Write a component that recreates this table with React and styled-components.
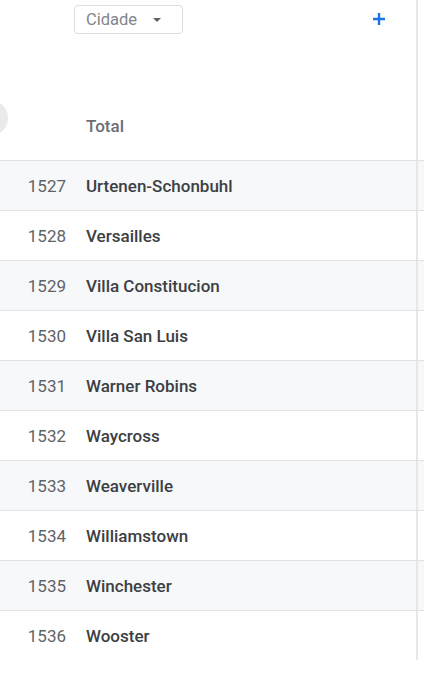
import React from 'react';
import styled, { createGlobalStyle } from 'styled-components';

const GlobalStyle = createGlobalStyle`
    body {
        margin: 0;
        background: #ffffff;
        font-family: Roboto, "Liberation Sans", sans-serif;
    }
`;

const Sheet = styled.div`
    width: 424px;
    height: 675px;
    overflow: hidden;
`;

const Band = styled.div`
    display: grid;
    grid-template-columns: 416px 2px 1fr;
    background: ${(props) => (props.shaded ? '#f7f8fa' : '#ffffff')};
    border-bottom: ${(props) => (props.last ? 'none' : '1px solid #e1e2e5')};
`;

const Divider = styled.div`
    background: #e6e7e9;
`;

const Toolbar = styled.div`
    height: 40px;
    display: flex;
    align-items: flex-start;
    padding: 5px 29px 0 74px;
    box-sizing: border-box;
    justify-content: space-between;
`;

const Select = styled.div`
    width: 109px;
    height: 29px;
    box-sizing: border-box;
    border: 1px solid #dadce0;
    border-radius: 4px;
    display: flex;
    align-items: center;
    padding-left: 11px;
    gap: 16px;
    font-size: 16.5px;
    color: #80868b;
`;

const Caret = styled.span`
    width: 0;
    height: 0;
    border-left: 4px solid transparent;
    border-right: 4px solid transparent;
    border-top: 4px solid #5f6368;
    margin-top: 1px;
`;

const AddButton = styled.div`
    width: 16px;
    height: 16px;
    margin-top: 6px;
    display: flex;
    align-items: center;
    justify-content: center;
`;

const HeaderCell = styled.div`
    height: 120px;
    box-sizing: border-box;
    padding-bottom: 24px;
    display: flex;
    align-items: flex-end;
`;

const Avatar = styled.div`
    width: 36px;
    height: 36px;
    border-radius: 50%;
    background: #eaeaea;
    margin-left: -28px;
    flex-shrink: 0;
`;

const HeaderLabel = styled.div`
    margin-left: 78px;
    font-size: 17px;
    line-height: 20px;
    font-weight: 500;
    color: #6b6f74;
`;

const RowCell = styled.div`
    height: 49px;
    display: flex;
    align-items: center;
    gap: 20px;
    font-size: 17px;
`;

const Rank = styled.div`
    width: 66px;
    text-align: right;
    color: #5f6368;
`;

const Name = styled.div`
    font-weight: 500;
    color: #3c4043;
`;

const Footer = styled.div`
    height: 15px;
`;

const cities = [
    [1527, 'Urtenen-Schonbuhl'],
    [1528, 'Versailles'],
    [1529, 'Villa Constitucion'],
    [1530, 'Villa San Luis'],
    [1531, 'Warner Robins'],
    [1532, 'Waycross'],
    [1533, 'Weaverville'],
    [1534, 'Williamstown'],
    [1535, 'Winchester'],
    [1536, 'Wooster'],
];

function App() {
    return (
        <>
            <GlobalStyle />
            <Sheet>
                <Band>
                    <div>
                        <Toolbar>
                            <Select>
                                Cidade
                                <Caret />
                            </Select>
                            <AddButton>
                                <svg width="14" height="14" viewBox="0 0 14 14">
                                    <path d="M7 1v12M1 7h12" stroke="#1a73e8" strokeWidth="2.4" />
                                </svg>
                            </AddButton>
                        </Toolbar>
                        <HeaderCell>
                            <Avatar />
                            <HeaderLabel>Total</HeaderLabel>
                        </HeaderCell>
                    </div>
                    <Divider />
                    <div />
                </Band>
                {cities.map(([rank, name], i) => (
                    <Band key={rank} shaded={i % 2 === 0} last={i === cities.length - 1}>
                        <RowCell>
                            <Rank>{rank}</Rank>
                            <Name>{name}</Name>
                        </RowCell>
                        <Divider />
                        <div />
                    </Band>
                ))}
                <Footer />
            </Sheet>
        </>
    );
}

export default App;
